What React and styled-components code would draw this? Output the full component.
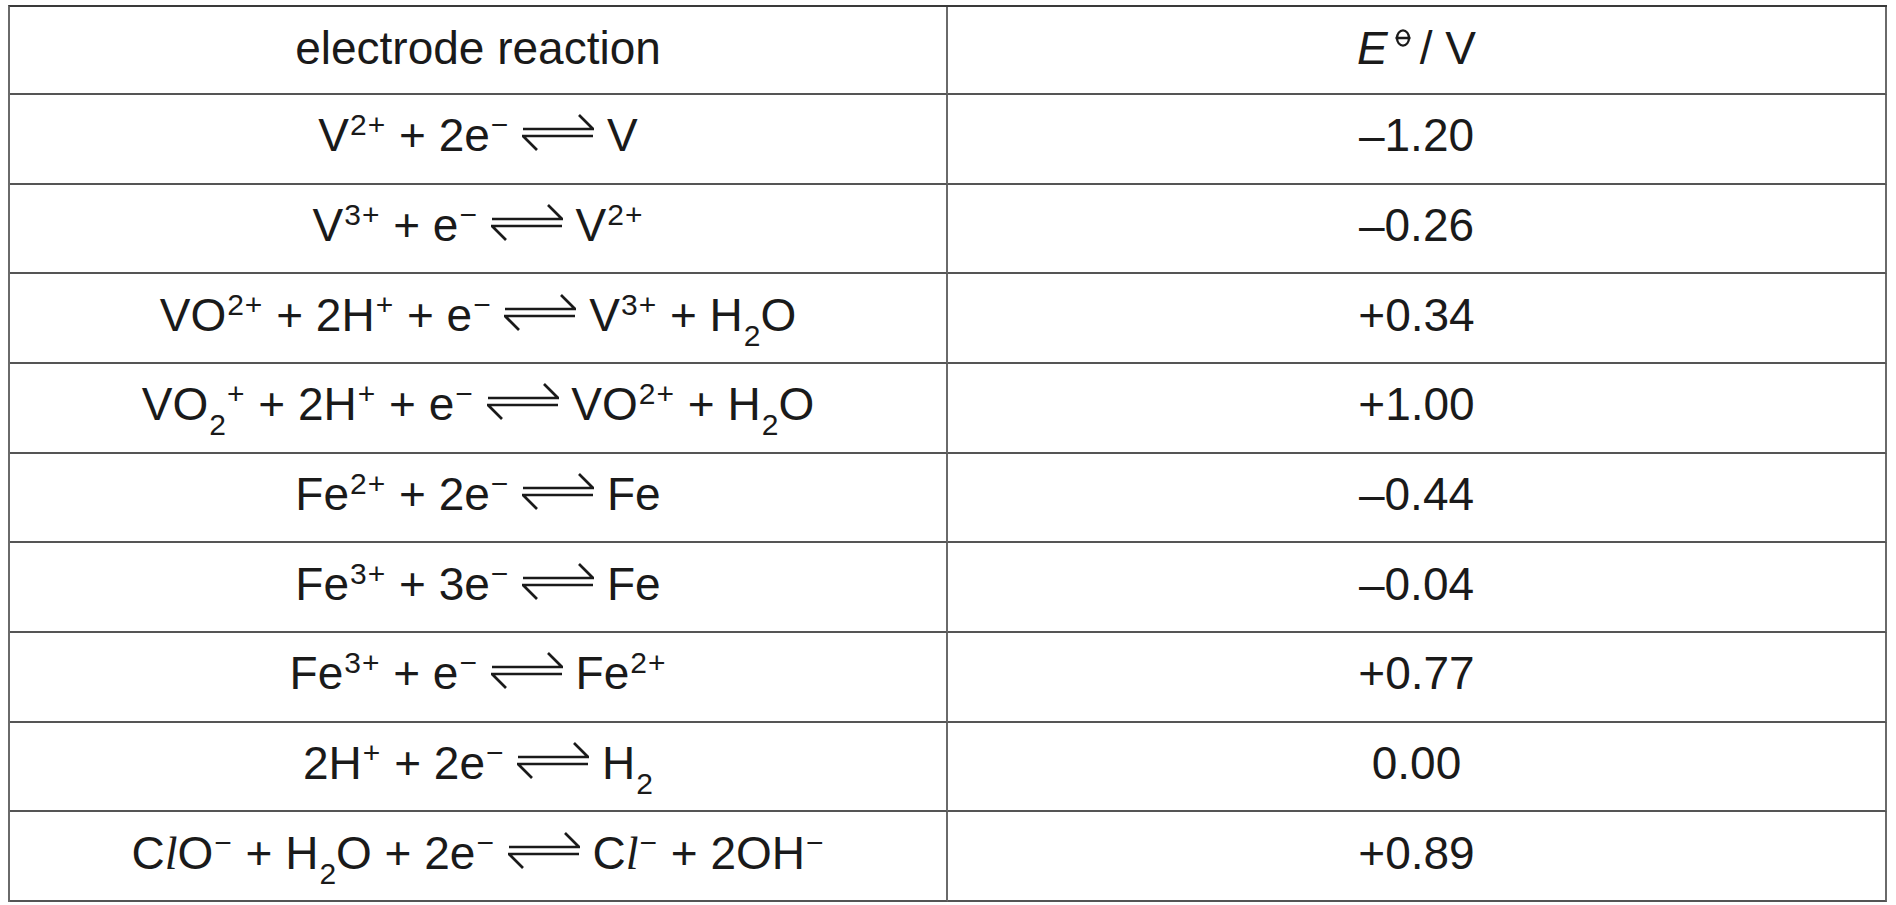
import styled, { createGlobalStyle } from "styled-components";

const GlobalStyle = createGlobalStyle`
    html, body {
        margin: 0;
        padding: 0;
        background: #ffffff;
    }
    body {
        font-family: "Liberation Sans", Arial, sans-serif;
        color: #1a1a1a;
    }
`;

const Page = styled.div`
    padding: 5px 0 0 8px;
`;

const Table = styled.div`
    width: 1879px;
    display: grid;
    grid-template-columns: 938px 1fr;
    grid-template-rows: 88px;
    grid-auto-rows: 89.67px;
    border-left: 2px solid #6a6a6a;
    border-top: 2px solid #3a3a3a;
    box-sizing: border-box;
`;

const Cell = styled.div`
    display: flex;
    align-items: center;
    justify-content: center;
    box-sizing: border-box;
    border-right: 2px solid #6a6a6a;
    border-bottom: 2px solid #555555;
    padding-bottom: ${(p) => (p.$head ? "4px" : "7px")};
`;

const Line = styled.span`
    display: block;
    font-size: 46px;
    line-height: normal;
    white-space: pre;
`;

const Sup = styled.span`
    font-size: 30px;
    line-height: 0;
    vertical-align: 16px;
    letter-spacing: 1px;
    margin-left: 1px;
`;

const Sub = styled.span`
    font-size: 30px;
    line-height: 0;
    vertical-align: -15px;
    margin-left: 1px;
`;

const ItalicL = styled.span`
    font-family: "Liberation Serif", "Times New Roman", serif;
    font-style: italic;
`;

const Italic = styled.span`
    font-style: italic;
`;

const ArrowSvg = styled.svg`
    width: 72px;
    height: 40px;
    vertical-align: baseline;
`;

const Standard = styled.svg`
    width: 16px;
    height: 18px;
    vertical-align: 17px;
    margin: 0 9px 0 7px;
`;

function Arrow() {
    return (
        <ArrowSvg viewBox="0 0 72 40">
            <g stroke="#1a1a1a" strokeWidth="2.7" fill="none" strokeLinecap="butt">
                <path d="M1 18 H71 L57 4" />
                <path d="M71 25 H1 L15 39" />
            </g>
        </ArrowSvg>
    );
}

function Plimsoll() {
    return (
        <Standard viewBox="0 0 16 18">
            <ellipse cx="8" cy="9" rx="6" ry="7.6" stroke="#1a1a1a" strokeWidth="2.3" fill="none" />
            <path d="M0.5 9 H15.5" stroke="#1a1a1a" strokeWidth="2.5" />
        </Standard>
    );
}

const rows = [
    [<>V<Sup>2+</Sup> + 2e<Sup>−</Sup> <Arrow /> V</>, "–1.20"],
    [<>V<Sup>3+</Sup> + e<Sup>−</Sup> <Arrow /> V<Sup>2+</Sup></>, "–0.26"],
    [<>VO<Sup>2+</Sup> + 2H<Sup>+</Sup> + e<Sup>−</Sup> <Arrow /> V<Sup>3+</Sup> + H<Sub>2</Sub>O</>, "+0.34"],
    [<>VO<Sub>2</Sub><Sup>+</Sup> + 2H<Sup>+</Sup> + e<Sup>−</Sup> <Arrow /> VO<Sup>2+</Sup> + H<Sub>2</Sub>O</>, "+1.00"],
    [<>Fe<Sup>2+</Sup> + 2e<Sup>−</Sup> <Arrow /> Fe</>, "–0.44"],
    [<>Fe<Sup>3+</Sup> + 3e<Sup>−</Sup> <Arrow /> Fe</>, "–0.04"],
    [<>Fe<Sup>3+</Sup> + e<Sup>−</Sup> <Arrow /> Fe<Sup>2+</Sup></>, "+0.77"],
    [<>2H<Sup>+</Sup> + 2e<Sup>−</Sup> <Arrow /> H<Sub>2</Sub></>, "0.00"],
    [<>C<ItalicL>l</ItalicL>O<Sup>−</Sup> + H<Sub>2</Sub>O + 2e<Sup>−</Sup> <Arrow /> C<ItalicL>l</ItalicL><Sup>−</Sup> + 2OH<Sup>−</Sup></>, "+0.89"],
];

export default function App() {
    return (
        <Page>
            <GlobalStyle />
            <Table>
                <Cell $head>
                    <Line>electrode reaction</Line>
                </Cell>
                <Cell $head>
                    <Line>
                        <Italic>E</Italic>
                        <Plimsoll />/ V
                    </Line>
                </Cell>
                {rows.map(([reaction, value], i) => [
                    <Cell key={"r" + i}>
                        <Line>{reaction}</Line>
                    </Cell>,
                    <Cell key={"v" + i}>
                        <Line>{value}</Line>
                    </Cell>,
                ])}
            </Table>
        </Page>
    );
}
